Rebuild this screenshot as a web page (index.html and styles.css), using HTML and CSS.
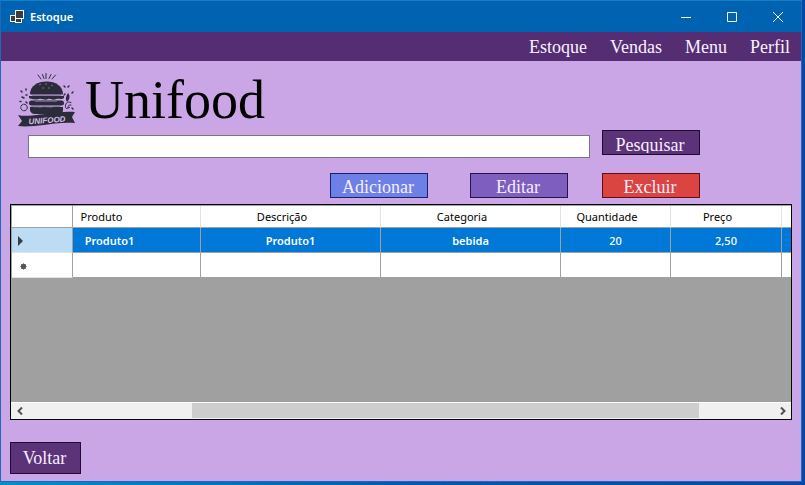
FILE: index.html
```html
<!DOCTYPE html>
<html lang="pt-BR">
<head>
<meta charset="utf-8">
<title>Estoque</title>
<link rel="stylesheet" href="styles.css">
</head>
<body>
<div class="window">
  <header class="titlebar">
    <svg class="app-icon" width="14" height="13" viewBox="0 0 14 13" aria-hidden="true">
      <g fill="#3c3c3c" stroke="#fff">
        <rect x="5.500" y="7.500" width="6" height="5"/>
        <rect x="0.500" y="5.500" width="5" height="6"/>
        <rect x="5.500" y="0.500" width="8" height="8"/>
      </g>
    </svg>
    <span class="title">Estoque</span>
    <div class="window-controls">
      <button type="button" aria-label="Minimizar"><svg width="10" height="10" viewBox="0 0 10 10"><path d="M0 5.500H10"/></svg></button>
      <button type="button" aria-label="Maximizar"><svg width="10" height="10" viewBox="0 0 10 10"><path d="M.5.5H9.500V9.500H.5Z"/></svg></button>
      <button type="button" aria-label="Fechar"><svg width="10" height="10" viewBox="0 0 10 10"><path d="M0 0L10 10M10 0L0 10"/></svg></button>
    </div>
  </header>

  <nav class="menu">
    <a href="#estoque">Estoque</a>
    <a href="#vendas">Vendas</a>
    <a href="#menu">Menu</a>
    <a href="#perfil">Perfil</a>
  </nav>

  <main class="content">
    <div class="brand">
      <svg class="logo" width="60" height="56" viewBox="0 0 60 56" aria-hidden="true">
        <g fill="none" stroke="#2d2d3c" stroke-linecap="round">
          <path d="M21 3l3 4M25.500 2.500l1.500 4M29 1.500v5M34 2.500l-2 4M38.500 3l-3.500 4"/>
          <circle cx="7" cy="35.500" r="3.300" stroke-dasharray="2 1"/>
          <path d="M54 30.500c-4-1.500-6 1-5.500 5M54 33c-2-.5-3 .5-3 2.500M49.500 36.500l3-1"/>
          <path d="M4 19l1 1M9 17v1M5 25l2 1M9 30l1 1M3 29.500h1M47 14l1 1M52 14l-1 1M56 20l-1 1M55 36l1 1M9 23h1M47 23l1-1" stroke-width="1.500"/>
        </g>
        <g fill="#2b2b3b">
          <path d="M13 21c1-7 7-11.500 16.500-11.500S45 14 46 21c0 1-.5 1.500-1.500 1.500h-30C13.500 22.500 13 22 13 21Z"/>
          <path d="M12 24h35v2c-3 2-5 0-8 1-3 2-5-1-8 0-3 2-6-1-9 0s-8 0-10-1Z"/>
          <rect x="12" y="28.500" width="35" height="5" rx="2.500"/>
          <path d="M13 35c5-1 9 1 13 0s7 1 10 0 7 0 10 0v3c0 3-2 4-5 4H18c-3 0-5-2-5-4Z"/>
          <path d="M51 21c3 3 1 7-1 9-2-3-1-6 1-9Z"/>
          <path d="M1 43c8 2 15 0 28-1 10-1 19-3 29-2l-3 5 3 6c-13-1-22 1-31 2-10 1-18 2-26 1l4-5Z"/>
        </g>
        <g fill="none" stroke="#8f80a8">
          <path d="M15 23.500h29M15 34.500c4 1 8-1 12 0s8-1 16 0"/>
          <path d="M22 13l2-1M28 12h2M34 13l2 1M25 16h2M31 16h2" stroke="#77708b"/>
          <path d="M18 29.500h22" stroke="#665d78"/>
        </g>
        <text class="logo-text" x="30" y="51" text-anchor="middle" transform="rotate(-4 30 48)">UNIFOOD</text>
      </svg>
      <h1>Unifood</h1>
    </div>

    <form class="search" role="search">
      <input class="search-box" type="text" aria-label="Pesquisar produto">
      <button class="btn btn-search" type="button"><span>Pesquisar</span></button>
    </form>

    <div class="actions">
      <button class="btn btn-add" type="button">Adicionar</button>
      <button class="btn btn-edit" type="button">Editar</button>
      <button class="btn btn-delete" type="button">Excluir</button>
    </div>

    <section class="grid" aria-label="Produtos">
      <table>
        <colgroup>
          <col class="col-marker"><col class="col-first"><col class="col-wide"><col class="col-wide"><col class="col-qty"><col class="col-price"><col>
        </colgroup>
        <thead>
          <tr><th></th><th>Produto</th><th>Descrição</th><th>Categoria</th><th>Quantidade</th><th>Preço</th><th></th></tr>
        </thead>
        <tbody>
          <tr class="selected">
            <td><svg width="5" height="10" viewBox="0 0 5 10"><path d="M0 0L5 5L0 10Z"/></svg></td>
            <td>Produto1</td><td>Produto1</td><td>bebida</td><td class="num">20</td><td class="num">2,50</td><td></td>
          </tr>
          <tr>
            <td><svg class="new-row" width="7" height="7" viewBox="0 0 7 7"><circle cx="3.500" cy="3.500" r="2.200"/><path d="M3.500 .5v6M.5 3.500h6M1.300 1.300l4.400 4.400M5.700 1.300L1.300 5.700"/></svg></td>
            <td></td><td></td><td></td><td></td><td></td><td></td>
          </tr>
        </tbody>
      </table>
      <div class="scrollbar">
        <button type="button" aria-label="Rolar para a esquerda"><svg width="6" height="8" viewBox="0 0 6 8"><path d="M5 .5L1.500 4L5 7.500"/></svg></button>
        <div class="track"><div class="thumb"></div></div>
        <button type="button" aria-label="Rolar para a direita"><svg width="6" height="8" viewBox="0 0 6 8"><path d="M1 .5L4.500 4L1 7.500"/></svg></button>
      </div>
    </section>

    <button class="btn btn-back" type="button">Voltar</button>
  </main>
</div>
</body>
</html>
```
FILE: styles.css
```css
* {
  box-sizing: border-box;
}

body {
  margin: 0;
  min-height: 100vh;
  display: flex;
  padding: 0 3px 3px 0;
  background: linear-gradient(to right, #0090d0, #0058b4 50%, #0648a8);
  font-family: "Liberation Serif", "Times New Roman", serif;
}

button {
  margin: 0;
  padding: 0;
  border: 0;
  background: none;
  font: inherit;
  color: inherit;
}

.window {
  flex: 1;
  min-width: 0;
  display: flex;
  flex-direction: column;
  border: 1px solid #2268b8;
  border-top-color: #0f7fcb;
  background: #cba6e6;
}

.titlebar {
  height: 31px;
  flex: none;
  display: flex;
  align-items: center;
  gap: 6px;
  padding-left: 9px;
  background: #0063b1;
  color: #fff;
}

.title {
  font: 600 11px/16px "Noto Sans", sans-serif;
}

.window-controls {
  display: flex;
  margin-left: auto;
}

.window-controls button {
  width: 46px;
  height: 30px;
  display: grid;
  place-items: center;
}

.window-controls svg {
  fill: none;
  stroke: #fff;
}

.menu {
  height: 29px;
  flex: none;
  display: flex;
  justify-content: flex-end;
  align-items: center;
  gap: 23px;
  padding-right: 11px;
  background: #552d73;
}

.menu a {
  color: #fbf2ff;
  font-size: 18px;
  line-height: 20px;
  text-decoration: none;
}

.content {
  flex: 1;
  display: flex;
  flex-direction: column;
  padding: 8px 9px 7px;
}

.brand {
  display: flex;
  align-items: center;
  gap: 8px;
  height: 61px;
  padding-left: 7px;
}

.brand h1 {
  margin: 0;
  font-size: 54px;
  line-height: 60px;
  font-weight: 400;
  color: #000;
}

.logo-text {
  font: italic 700 8px "Liberation Sans", sans-serif;
  fill: #d9c3e9;
}

.search,
.actions {
  display: flex;
  padding-right: 92px;
}

.search {
  gap: 12px;
  padding-left: 18px;
}

.search-box {
  flex: 1;
  min-width: 0;
  height: 23px;
  margin-top: 5px;
  padding: 0 4px;
  border: 1px solid #7a7580;
  background: #fff;
  font: inherit;
}

.actions {
  justify-content: flex-end;
  margin-top: 15px;
}

.btn {
  width: 98px;
  height: 25px;
  padding: 2px 2px 0 0;
  border: 1px solid #1d0b30;
  font-size: 18px;
  line-height: 20px;
  color: #f8eeff;
}

.btn-search,
.btn-back {
  background: #5c3279;
}

.btn-search span {
  display: block;
  height: 18px;
  overflow: hidden;
}

.btn-add {
  margin-right: 42px;
  border-color: #17206a;
  background: #6d80e6;
}

.btn-edit {
  margin-right: 34px;
  border-color: #26134a;
  background: #7e5fc0;
}

.btn-delete {
  border-color: #5c1016;
  background: #db4441;
}

.btn-back {
  width: 71px;
  height: 32px;
  padding-top: 0;
}

.grid {
  flex: 1;
  display: flex;
  flex-direction: column;
  margin: 6px 0 22px;
  border: 1px solid #000;
  padding: 1px 0 0 1px;
  background: #a0a0a0;
  font: 11px/16px "Noto Sans", sans-serif;
}

.grid table {
  width: 100%;
  table-layout: fixed;
  border-collapse: separate;
  border-spacing: 0;
  background: #fff;
}

.col-marker { width: 61px; }
.col-first { width: 128px; }
.col-wide { width: 180px; }
.col-qty { width: 110px; }
.col-price { width: 111px; }

.grid th,
.grid td {
  padding: 0;
  border-right: 1px solid #a0a0a0;
  border-bottom: 1px solid #a0a0a0;
  text-align: center;
}

.grid th {
  height: 22px;
  padding-right: 17px;
  border-right-color: #e3e3e3;
  font-weight: 400;
  color: #000;
}

.grid th:first-child {
  border-right-color: #a0a0a0;
}

.grid th:nth-child(2) {
  padding-right: 70px;
}

.grid td {
  height: 25px;
  padding-top: 2px;
  font-weight: 600;
}

.grid td:nth-child(2) {
  padding-right: 54px;
}

.grid td:first-child {
  padding-left: 6px;
  border-bottom-color: #e3e3e3;
  text-align: left;
}

.grid th:last-child,
.grid td:last-child {
  padding: 0;
  border-right: 0;
}

.grid td svg {
  display: block;
  fill: #3c3c3c;
}

.grid td .new-row {
  margin-left: 2px;
  stroke: #555;
}

.selected td {
  background: #0078d7;
  color: #fff;
}

.selected td:first-child {
  background: #bcdcf4;
}

.grid .num {
  font-weight: 500;
}

.scrollbar {
  display: flex;
  height: 17px;
  margin-top: auto;
  margin-left: -1px;
  padding-bottom: 1px;
  border-top: 1px solid #fff;
  background: #f0f0f0;
}

.scrollbar button {
  width: 17px;
  display: grid;
  place-items: center;
}

.scrollbar svg {
  fill: none;
  stroke: #505050;
  stroke-width: 2;
}

.track {
  flex: 1;
}

.thumb {
  width: 68%;
  height: 100%;
  margin-left: 22%;
  background: #cdcdcd;
}
```
